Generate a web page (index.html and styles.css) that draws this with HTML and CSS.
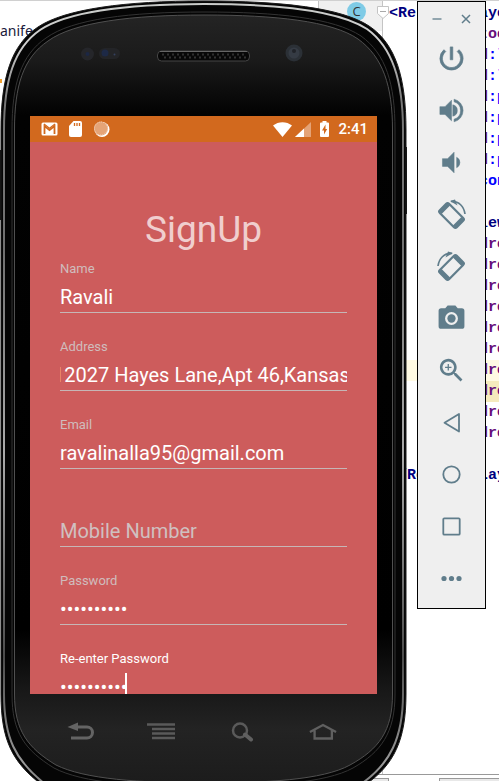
FILE: index.html
```html
<!DOCTYPE html>
<html lang="en">
<head>
<meta charset="utf-8">
<meta name="viewport" content="width=device-width, initial-scale=1">
<title>SignUp</title>
<link rel="stylesheet" href="styles.css">
</head>
<body>
<div class="editor">
  <div class="project">anife</div>
  <div class="project-mark"></div>
  <div class="gutter"><span class="class-badge">C</span></div>
  <svg class="fold" viewBox="0 0 12 13"><path d="M.5.5h11v7l-5.500 5-5.500-5z" fill="#fff" stroke="#c4c4c4"/><path d="M3 5.500h6" stroke="#aaa"/></svg>
  <pre class="code"><span class="tag">&lt;RelativeLayout</span>
    <span class="ns">xmlns:</span><span class="attr">tools</span>
    <span class="attr">android<b>:l</b></span>
    <span class="attr">android<b>:l</b></span>
    <span class="attr">android<b>:p</b></span>
    <span class="attr">android<b>:p</b></span>
    <span class="attr">android<b>:p</b></span>
    <span class="attr">android<b>:p</b></span>
    <span class="attr">tools:<b>con</b></span>

    <span class="tag">&lt;TextView</span>
        <span class="ns">android</span>
        <span class="ns">android</span>
        <span class="ns">android</span>
        <span class="ns">android</span>
        <span class="ns">android</span>
        <span class="ns">android</span>
<span class="current">        <span class="ns">android</span></span>
        <span class="ns found">android</span>
        <span class="ns">android</span>
        <span class="ns">android</span>

<span class="tag">&lt;/RelativeLayout</span></pre>
  <div class="editor-foot"><span class="tab tab-a"></span><span class="tab tab-b"></span></div>
</div>

<main class="stage">
  <section class="phone">
    <svg class="shell" viewBox="0 0 407 781" preserveAspectRatio="none" aria-hidden="true">
      <defs>
        <linearGradient id="face" x1="0" y1="0" x2="0" y2="1">
          <stop offset="0" stop-color="#242424"/><stop offset=".06" stop-color="#1a1a1a"/><stop offset=".13" stop-color="#020202"/>
          <stop offset=".8" stop-color="#000"/><stop offset=".88" stop-color="#181818"/><stop offset=".93" stop-color="#232323"/><stop offset="1" stop-color="#1c1c1c"/>
        </linearGradient>
        <linearGradient id="rim" x1="0" y1="0" x2="0" y2="1">
          <stop offset="0" stop-color="#c9cbc9"/><stop offset=".05" stop-color="#d0d0d0"/><stop offset=".12" stop-color="#777"/>
          <stop offset=".3" stop-color="#707070"/><stop offset=".55" stop-color="#aaa"/><stop offset=".8" stop-color="#4c4c4c"/><stop offset=".93" stop-color="#999"/><stop offset="1" stop-color="#555"/>
        </linearGradient>
      </defs>
      <path d="M0 150h1.500v70H0zM405 147h3v67h-3z" fill="#111"/>
      <path d="M1 130C1 78 11 45 38 27C65 9 125 1 204 1C282 1 342 8 369 26C396 44 406 78 406 130V694C406 740 394 765 365 785L360 820H50L42 785C12 762 1 740 1 694Z" fill="#050505" stroke="#1b1b1b"/>
      <path d="M4 130C4 80 14 48 40 30C67 12 127 4 204 4C280 4 340 11 367 29C392 47 403 80 403 130V694C403 738 390 764 361 784L355 820H50L45 784C15 760 4 738 4 694Z" fill="none" stroke="url(#rim)" stroke-width="2"/>
      <path d="M12 130C12 84 21 55 46 38C72 19 130 12 204 12C277 12 334 18 361 36C386 54 395 84 395 130V694C395 733 381 752 353 768C326 783 265 787 204 787C140 787 82 783 54 768C25 750 12 733 12 694Z" fill="none" stroke="#333"/>
      <path d="M14.500 130C14.500 86 23 58 48 41C74 22 132 15 204 15C275 15 332 21 358 39C383 57 392.500 86 392.500 130V694C392.500 731 379 749 350 765C323 780 265 783 204 783C140 783 84 779 56 765C28 748 14.500 731 14.500 694Z" fill="url(#face)" stroke="#505050"/>
    </svg>
    <div class="earpiece">
      <svg viewBox="0 0 347 40" aria-hidden="true">
        <circle cx="57.500" cy="20" r="6.500" fill="#25262a"/><circle cx="57.500" cy="20" r="2" fill="#1c2744"/>
        <rect x="69" y="14" width="21" height="11" rx="5.500" fill="#232427"/><circle cx="75" cy="19" r="3.500" fill="#1d2946"/><circle cx="84.500" cy="20.500" r="1" fill="#34415f"/>
        <rect x="127.500" y="17" width="92" height="10" rx="4" fill="#080808" stroke="#454545"/>
        <path d="M130 17.500h87" stroke="#666"/>
        <path d="M132 20.500h85" stroke="#303030" stroke-width="2" stroke-dasharray="2 3"/><path d="M134 23.500h82" stroke="#333" stroke-width="2" stroke-dasharray="2 3"/>
        <circle cx="264" cy="19" r="8.500" fill="#2b3036"/><circle cx="264" cy="19" r="5.500" fill="#353b44"/><circle cx="264" cy="17" r="2" fill="#202329"/>
      </svg>
    </div>

    <div class="screen">
      <header class="status">
        <svg class="notice" viewBox="0 0 17 14"><rect x=".5" y=".5" width="16" height="13" rx="1.500" fill="#fff"/><path d="M3.500 12V4l5 4 5-4v8" fill="none" stroke="#d2691e" stroke-width="1.800"/><path d="M3 2l5.500 4.300L14 2" fill="none" stroke="#d2691e" stroke-width="1.200"/></svg>
        <svg class="notice" viewBox="0 0 17 16"><path d="M6.500 0H13a2 2 0 0 1 2 2v12a2 2 0 0 1-2 2H4a2 2 0 0 1-2-2V5z" fill="#fff"/><path d="M7.500 2v3M10 2v3M12.500 2v3" stroke="#d2691e" stroke-width="1.300"/></svg>
        <svg class="notice" viewBox="0 0 16 16"><circle cx="8.500" cy="8.500" r="7.500" fill="#fff"/><circle cx="7.500" cy="7.500" r="7" fill="#e5a477"/><circle cx="7.500" cy="7.500" r="6.500" fill="none" stroke="#f5d6c1" stroke-dasharray="1 1"/></svg>
        <span class="spacer"></span>
        <svg class="wifi" viewBox="0 0 19 15"><path d="M0 3.500C5.500-1 13.500-1 19 3.500L9.500 15z" fill="#fff"/></svg>
        <svg class="signal" viewBox="0 0 16 15"><path d="M16 0v15H0z" fill="#e4a377"/><path d="M9 6.500V15H0z" fill="#fff"/></svg>
        <svg class="battery" viewBox="0 0 9 16"><path d="M2.500 0h4v1.500H8a1 1 0 0 1 1 1V15a1 1 0 0 1-1 1H1a1 1 0 0 1-1-1V2.500a1 1 0 0 1 1-1h1.500z" fill="#fff"/><path d="M5.500 3.500L2 9.500h2v4L7.200 8H5.500z" fill="#d2691e"/></svg>
        <time>2:41</time>
      </header>
      <form class="form">
        <h1>SignUp</h1>
        <div class="field"><label for="name">Name</label><input id="name" type="text" value="Ravali"></div>
        <div class="field"><label for="address">Address</label><input id="address" class="scrolled" type="text" value="12027 Hayes Lane,Apt 46,Kansas"></div>
        <div class="field"><label for="email">Email</label><input id="email" type="email" value="ravalinalla95@gmail.com"></div>
        <div class="field"><span class="no-label"></span><input id="mobile" type="tel" placeholder="Mobile Number" aria-label="Mobile Number"></div>
        <div class="field"><label for="password">Password</label><input id="password" type="password" value="aaaaaaaaaa"></div>
        <div class="field active"><label for="again">Re-enter Password</label><input id="again" type="password" value="aaaaaaaaaa"><span class="caret"></span></div>
      </form>
    </div>

    <nav class="keys">
      <button aria-label="Back"><svg viewBox="0 0 28 20"><path d="M8 5h13a5 5 0 0 1 0 11H5" fill="none" stroke="#646464" stroke-width="3"/><path d="M1.500 5L12 .5v8.500z" fill="#646464"/></svg></button>
      <button aria-label="Menu"><svg viewBox="0 0 28 20"><path d="M0 2.500h28M5 7h23M5 11.500h23M5 16h23" stroke="#5a5a5a" stroke-width="2.500"/></svg></button>
      <button aria-label="Search"><svg viewBox="0 0 28 20"><circle cx="12" cy="8.500" r="7" fill="none" stroke="#5a5a5a" stroke-width="2.500"/><path d="M17 12.500l6 5" stroke="#606060" stroke-width="4" stroke-linecap="round"/></svg></button>
      <button aria-label="Home"><svg viewBox="0 0 30 20"><path d="M1 10L15 2.500 29 10M6 8.500V17h18.500V8.500" fill="none" stroke="#606060" stroke-width="2.500"/></svg></button>
    </nav>
  </section>

  <aside class="tools">
    <div class="window-keys">
      <button aria-label="Minimize"><svg viewBox="0 0 10 10"><path d="M.5 5h9" stroke="#607d8b" stroke-width="1.300"/></svg></button>
      <button aria-label="Close"><svg viewBox="0 0 10 10"><path d="M1 1l8 8M9 1L1 9" stroke="#607d8b" stroke-width="1.500"/></svg></button>
    </div>
    <button aria-label="Power"><svg viewBox="0 0 24 24"><path d="M13 3h-2v10h2V3zm4.830 2.170l-1.420 1.420A6.920 6.920 0 0 1 19 12a7 7 0 1 1-11.420-5.420L6.170 5.170A8.930 8.930 0 0 0 3 12a9 9 0 0 0 18 0c0-2.740-1.230-5.180-3.170-6.830z" stroke="#607d8b" stroke-width=".5"/></svg></button>
    <button aria-label="Volume up"><svg viewBox="0 0 24 24"><path d="M3 9v6h4l5 5V4L7 9H3zm13.500 3A4.500 4.500 0 0 0 13 7.600v8.800A4.500 4.500 0 0 0 16.500 12zM14 3.230v2.060a7 7 0 0 1 0 13.420v2.060a9 9 0 0 0 0-17.540z" stroke="#607d8b" stroke-width=".4"/></svg></button>
    <button aria-label="Volume down"><svg viewBox="0 0 24 24"><path d="M18.500 12A4.500 4.500 0 0 0 16 7.970v8.050A4.500 4.500 0 0 0 18.500 12zM5 9v6h4l5 5V4L9 9H5z" stroke="#607d8b" stroke-width=".4"/></svg></button>
    <button aria-label="Rotate left"><svg viewBox="0 0 31 31"><g transform="translate(15.500 16.500) rotate(45)"><rect x="-12" y="-6.500" width="24" height="13" rx="2" fill="none" stroke="#607d8b" stroke-width="2.200"/><path d="M-12-6h4V6h-4zM8-6h4V6H8z"/></g><path d="M15 2.500C23 2 28 7.500 29 15" fill="none" stroke="#607d8b" stroke-width="1.700"/><path d="M14 2l5-1.500 2.500 6z"/></svg></button>
    <button aria-label="Rotate right"><svg viewBox="0 0 31 31"><g transform="translate(15.500 16.500) rotate(-45)"><rect x="-12" y="-6.500" width="24" height="13" rx="2" fill="none" stroke="#607d8b" stroke-width="2.200"/><path d="M-12-6h4V6h-4zM8-6h4V6H8z"/></g><path d="M16 2.500C8 2 3 7.500 2 15" fill="none" stroke="#607d8b" stroke-width="1.700"/><path d="M17 2l-5-1.500-2.500 6z"/></svg></button>
    <button aria-label="Screenshot"><svg viewBox="0 0 24 24"><circle cx="12" cy="12" r="3.200"/><path d="M9 2L7.170 4H4a2 2 0 0 0-2 2v12a2 2 0 0 0 2 2h16a2 2 0 0 0 2-2V6a2 2 0 0 0-2-2h-3.170L15 2H9zm3 15a5 5 0 1 1 0-10 5 5 0 0 1 0 10z"/></svg></button>
    <button aria-label="Zoom"><svg viewBox="0 0 24 24"><path d="M15.500 14h-.79l-.28-.27A6.500 6.500 0 1 0 13.730 14.430l.27.280v.79l5 4.990L20.490 19l-4.990-5zm-6 0a4.500 4.500 0 1 1 0-9 4.500 4.500 0 0 1 0 9zM12 10h-2v2H9v-2H7V9h2V7h1v2h2v1z"/></svg></button>
    <button aria-label="Back"><svg viewBox="0 0 31 31"><path d="M23 7v17.500L8.500 15.700z" fill="none" stroke="#607d8b" stroke-width="1.800" stroke-linejoin="round"/></svg></button>
    <button aria-label="Home"><svg viewBox="0 0 31 31"><circle cx="15.500" cy="15.500" r="8.200" fill="none" stroke="#607d8b" stroke-width="1.800"/></svg></button>
    <button aria-label="Overview"><svg viewBox="0 0 31 31"><rect x="7.300" y="7.300" width="16.400" height="16.400" rx="1" fill="none" stroke="#607d8b" stroke-width="1.800"/></svg></button>
    <button aria-label="More"><svg viewBox="0 0 31 31"><circle cx="8" cy="15.500" r="2.600"/><circle cx="15.500" cy="15.500" r="2.600"/><circle cx="23" cy="15.500" r="2.600"/></svg></button>
  </aside>
</main>
</body>
</html>
```

FILE: styles.css
```css
* { box-sizing: border-box; }

body {
  margin: 0;
  position: relative;
  min-height: 100vh;
  overflow: hidden;
  background: #fff;
  font-family: Roboto, "Noto Sans", sans-serif;
}

button {
  display: flex;
  align-items: center;
  justify-content: center;
  padding: 0;
  border: 0;
  background: none;
}

svg { display: block; }

/* Code editor behind the emulator */
.editor {
  position: absolute;
  inset: 0;
  overflow: hidden;
}

.project {
  position: absolute;
  top: 20px;
  left: 0;
  font: 14px/22px "Noto Sans", sans-serif;
  color: #1a1a3a;
}

.project-mark {
  position: absolute;
  top: 79px;
  left: 0;
  width: 2px;
  height: 4px;
  background: #f0a030;
}

.gutter {
  position: absolute;
  top: 0;
  bottom: 6px;
  left: 318px;
  width: 65px;
  border: 1px solid #c4c4c4;
  border-bottom: 0;
  background: linear-gradient(#f0f0f0 30px, #fff 30px);
}

.class-badge {
  display: block;
  width: 19px;
  height: 19px;
  margin: 1px 0 0 28px;
  border-radius: 50%;
  background: #7fcbe6;
  color: #333;
  font: 13px/19px "Open Sans", sans-serif;
  text-align: center;
}

.fold {
  position: absolute;
  top: 6px;
  left: 377px;
  width: 12px;
  height: 13px;
}

.code {
  position: absolute;
  inset: 0;
  margin: 0;
  padding: 2px 0 0 389px;
  border-top: 1px solid #d0d0d0;
  font: 15px/21px "Liberation Mono", monospace;
}

.tag { color: #000080; font-weight: bold; }
.ns { color: #660e7a; font-weight: bold; }
.attr { color: #660e7a; font-weight: bold; }
.attr b { color: #0000ff; }
.current { display: inline-block; width: 100%; background: #fffae3; vertical-align: top; }
.found { display: inline-block; padding-right: 9px; background: #f5eabd; vertical-align: top; }

.editor-foot {
  position: absolute;
  bottom: 0;
  left: 360px;
  right: 0;
  height: 7px;
  border-top: 1px solid #999;
  background: #fff;
  display: flex;
  align-items: flex-end;
  justify-content: space-between;
}

.tab {
  height: 3px;
  border: 1px solid #999;
  border-bottom: 0;
  background: #e8e8e8;
}

.tab-a { width: 29px; }
.tab-b { width: 60px; border-right: 0; }

/* Emulator and its tool strip */
.stage {
  position: relative;
  display: flex;
  align-items: flex-start;
  gap: 10px;
  height: 100vh;
  padding-right: 13px;
}

.phone {
  position: relative;
  flex: 1;
  min-width: 0;
  height: 100%;
  display: flex;
  flex-direction: column;
  padding: 0 30px;
}

.shell {
  position: absolute;
  inset: 0;
  width: 100%;
  height: 100%;
}

.earpiece {
  position: relative;
  flex: none;
  height: 116px;
  padding-top: 34px;
}

.screen {
  position: relative;
  flex: 1;
  min-height: 0;
  overflow: hidden;
  background: #cd5c5c;
}

.status {
  display: flex;
  align-items: center;
  height: 26px;
  padding: 0 9px 0 11px;
  background: #d2691e;
  color: #fff;
}

.status time {
  margin-left: 9px;
  font-size: 15px;
  font-weight: 500;
  line-height: 26px;
}

.notice { width: 17px; height: 16px; margin-right: 9px; }
.spacer { flex: 1; }
.wifi { width: 19px; height: 15px; }
.signal { width: 16px; height: 15px; margin: 0 9px 0 3px; }
.battery { width: 9px; height: 16px; }

.form { padding: 64px 30px 0; }

.form h1 {
  margin: 0;
  font-size: 37px;
  font-weight: 400;
  line-height: 48px;
  text-align: center;
  color: #f0cece;
}

.field {
  position: relative;
  height: 78px;
  padding-top: 7px;
}

.field label,
.no-label {
  display: block;
  height: 15px;
  font-size: 13px;
  line-height: 15px;
  color: #d0bcbc;
}

.field input {
  display: block;
  width: 100%;
  height: 37px;
  padding: 6px 0 0;
  border: 0;
  border-bottom: 1px solid #c6b6b6;
  border-radius: 0;
  outline: 0;
  background: none;
  color: #fff;
  font: 20px/30px Roboto, sans-serif;
}

.field input::placeholder { color: #d0c0c0; opacity: 1; }
.field .scrolled { text-indent: -7px; }
.active label { color: #fff; }

.caret {
  position: absolute;
  top: 29px;
  left: 65px;
  width: 2px;
  height: 24px;
  background: #fff;
}

.keys {
  position: relative;
  flex: none;
  display: flex;
  height: 87px;
  padding: 28px 14px 0 9px;
  align-items: flex-start;
}

.keys button { flex: 1; }
.keys svg { width: 28px; height: 20px; }

.tools {
  flex: none;
  width: 69px;
  margin-top: 1px;
  padding-bottom: 4px;
  border: 1px solid #000;
  background: #efefef;
}

.tools svg { width: 31px; height: 31px; fill: #607d8b; }
.tools > button { width: 100%; height: 52px; }

.window-keys {
  display: flex;
  justify-content: center;
  gap: 19px;
  height: 30px;
  padding-top: 7px;
}

.window-keys button { width: 10px; height: 20px; }
.window-keys svg { width: 10px; height: 10px; }
```
